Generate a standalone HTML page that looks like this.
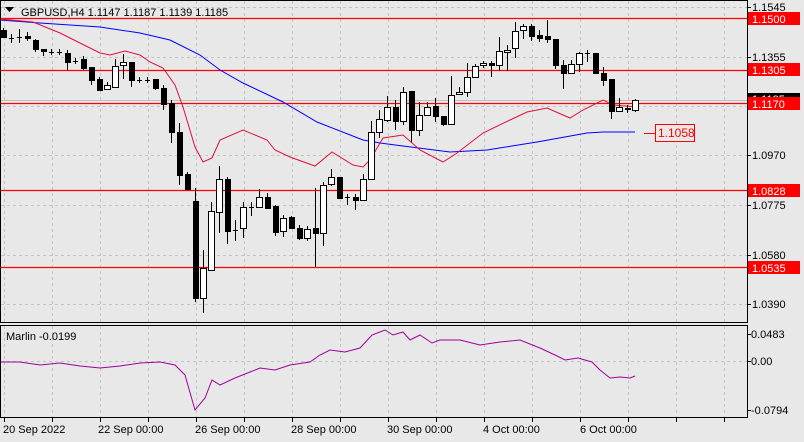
<!DOCTYPE html>
<html><head><meta charset="utf-8"><style>
body{margin:0;width:804px;height:442px;background:#e8e8e8;overflow:hidden;font-family:"Liberation Sans",sans-serif}
svg{position:absolute;left:0;top:0}
</style></head><body>
<svg id="s" width="804" height="442" xmlns="http://www.w3.org/2000/svg" font-family="Liberation Sans, sans-serif" font-size="11">
<rect width="804" height="442" fill="#e8e8e8"/>
<g id="grid" stroke="#c4c4c4" stroke-dasharray="3,3" stroke-width="1"></g>
<g stroke="#f00" stroke-width="1.2">
<line x1="0" y1="18.5" x2="747" y2="18.5"/>
<line x1="0" y1="70.5" x2="747" y2="70.5"/>
<line x1="0" y1="190.5" x2="747" y2="190.5"/>
<line x1="0" y1="267.5" x2="747" y2="267.5"/>
</g>
<line x1="0" y1="100.5" x2="747" y2="100.5" stroke="#c0c0c0"/>
<line x1="0" y1="103.5" x2="747" y2="103.5" stroke="#f00" stroke-width="1.2"/>
<polyline fill="none" stroke="#00f" stroke-width="1" points="0,20 40,23 100,27 140,33 170,40 200,55 220,70 243,83 283,102 317,122 363,140 380,143 403,146 450,152 487,150 537,142 587,133 603,132 635,132"/>
<polyline fill="none" stroke="#e0103a" stroke-width="1" points="0,19 33,22 60,33 80,43 100,53 110,55 125,51 140,55 150,62 163,68 175,85 183,107 195,147 203,162 212,158 220,140 243,130 267,140 275,150 290,157 315,166 332,152 353,165 363,167 370,160 383,138 403,135 420,150 443,162 457,153 483,133 510,120 527,112 547,108 570,118 583,110 603,100 613,105 637,107"/>
<g id="c"></g>
<line x1="644" y1="133.5" x2="655" y2="133.5" stroke="#f00"/>
<rect x="655.5" y="124.5" width="39" height="17" fill="#e8e8e8" stroke="#f00"/>
<text x="658" y="137" fill="#f00" font-size="12">1.1058</text>
<polyline fill="none" stroke="#a000a0" stroke-width="1" points="0,362 20,362 40,365 60,363 80,366 100,368 120,366 140,363 160,362 175,365 185,375 195,410 205,398 212,380 220,385 235,378 250,372 260,368 275,370 290,365 310,362 320,355 330,350 345,352 360,348 372,335 385,330 393,335 403,332 410,340 420,335 432,343 440,340 460,340 480,345 500,342 520,340 540,348 555,355 565,360 578,358 592,362 600,370 610,378 620,377 630,378 635,376"/>
<rect x="0.5" y="0.5" width="747" height="322" fill="none" stroke="#000"/>
<rect x="0.5" y="325.5" width="747" height="92" fill="none" stroke="#000"/>
<path d="M5 7h9l-4.5 5z" fill="#000"/>
<text x="21" y="16" fill="#000">GBPUSD,H4  1.1147 1.1187 1.1139 1.1185</text>
<text x="6" y="340" fill="#000">Marlin -0.0199</text>
<g id="ax" fill="#000"></g>
<rect x="748" y="93" width="52" height="12" fill="#000"/>
<text x="752" y="103" fill="#fff">1.1185</text>
<g fill="#f00"><rect x="748" y="12" width="52" height="13"/><rect x="748" y="63" width="52" height="13"/><rect x="748" y="97" width="52" height="13"/><rect x="748" y="184" width="52" height="13"/><rect x="748" y="261" width="52" height="13"/></g>
<g fill="#fff"><text x="752" y="23">1.1500</text><text x="752" y="74">1.1305</text><text x="752" y="108">1.1170</text><text x="752" y="195">1.0828</text><text x="752" y="272">1.0535</text></g>
</svg>
<script>
var ns="http://www.w3.org/2000/svg",g=document.getElementById('grid'),c=document.getElementById('c'),ax=document.getElementById('ax');
function el(p,t,a){var e=document.createElementNS(ns,t);for(var k in a)e.setAttribute(k,a[k]);p.appendChild(e);return e;}
for(var x=4;x<747;x+=48){el(g,'line',{x1:x+.5,y1:1,x2:x+.5,y2:322});el(g,'line',{x1:x+.5,y1:326,x2:x+.5,y2:417});el(ax,'rect',{x:x,y:418,width:1,height:4});}
[7,57,106,155,205,255,304].forEach(function(y){el(g,'line',{x1:1,y1:y+.5,x2:747,y2:y+.5});el(ax,'rect',{x:747,y:y,width:4,height:1});});
el(g,'line',{x1:1,y1:361.5,x2:747,y2:361.5});
var lab=[[1.1545,7],[1.1355,57],[1.0970,155],[1.0775,205],[1.0580,255],[1.0390,304]];
lab.forEach(function(l){var t=el(ax,'text',{x:752,y:l[1]+4});t.textContent=l[0].toFixed(4);});
[["0.0483",334],["0.00",361],["-0.0794",410]].forEach(function(l){el(ax,'rect',{x:747,y:l[1],width:4,height:1});var t=el(ax,'text',{x:751,y:l[1]+4});t.textContent=l[0];});
[["20 Sep 2022",3],["22 Sep 00:00",98],["26 Sep 00:00",195],["28 Sep 00:00",291],["30 Sep 00:00",387],["4 Oct 00:00",483],["6 Oct 00:00",580]].forEach(function(d){var t=el(ax,'text',{x:d[1],y:433});t.textContent=d[0];});
// x, open, close, high, low
var C=[[3,30,37,28,38],[11,38,38,34,43],[19,37,37,29,43],[27,36,38,32,41],[35,40,49,39,52],[43,49,51,49,56],[51,52,52,49,55],[59,52,52,49,55],[67,53,62,50,70],[75,61,61,58,64],[83,59,68,56,70],[91,67,80,67,85],[99,79,90,77,90],[107,89,85,82,90],[115,87,66,59,88],[123,65,62,54,79],[131,62,80,62,87],[139,80,80,77,83],[147,80,80,77,83],[155,79,88,79,90],[163,88,104,85,110],[171,103,132,100,143],[179,132,175,123,185],[187,174,189,172,190],[195,201,298,188,302],[203,298,268,250,313],[211,270,211,202,271],[219,212,179,166,233],[227,179,231,177,244],[235,230,230,220,241],[243,228,207,202,238],[251,207,207,202,216],[259,207,197,189,208],[267,197,208,193,209],[275,206,232,205,236],[283,231,218,215,237],[291,217,228,216,229],[299,228,238,225,240],[307,238,229,226,241],[315,228,233,188,267],[323,233,185,182,246],[331,184,177,169,186],[339,177,198,177,198],[347,197,197,194,205],[355,197,200,194,210],[363,200,179,174,200],[371,179,132,121,179],[379,132,119,110,138],[387,120,107,96,122],[395,107,121,100,130],[403,121,92,87,125],[411,91,130,91,142],[419,130,115,102,136],[427,115,107,102,115],[435,106,116,98,122],[443,116,124,116,126],[451,124,95,76,124],[459,94,92,87,95],[467,92,77,63,97],[475,77,66,64,78],[483,65,63,61,68],[491,63,65,61,77],[499,65,51,37,71],[507,52,50,45,71],[515,48,31,22,58],[523,30,26,24,39],[531,26,36,24,41],[539,35,38,30,42],[547,36,39,20,43],[555,39,65,39,69],[563,65,73,60,89],[571,73,64,60,74],[579,64,53,52,72],[587,53,53,50,62],[595,53,73,53,74],[603,73,80,67,86],[611,79,111,79,119],[619,111,107,98,111],[627,108,109,105,113],[635,110,100,99,112]];
C.forEach(function(d){var x=d[0],o=d[1],cl=d[2],h=d[3],l=d[4];
el(c,'line',{x1:x+.5,y1:h,x2:x+.5,y2:l,stroke:'#000'});
var top=Math.min(o,cl),ht=Math.abs(o-cl);
if(ht<1){el(c,'rect',{x:x-2,y:top,width:5,height:1,fill:'#000'});}
else if(cl<o){el(c,'rect',{x:x-2.5,y:top+.5,width:6,height:ht,fill:'#fff',stroke:'#000'});}
else{el(c,'rect',{x:x-2,y:top,width:6,height:ht+1,fill:'#000'});}
});
</script>
</body></html>
